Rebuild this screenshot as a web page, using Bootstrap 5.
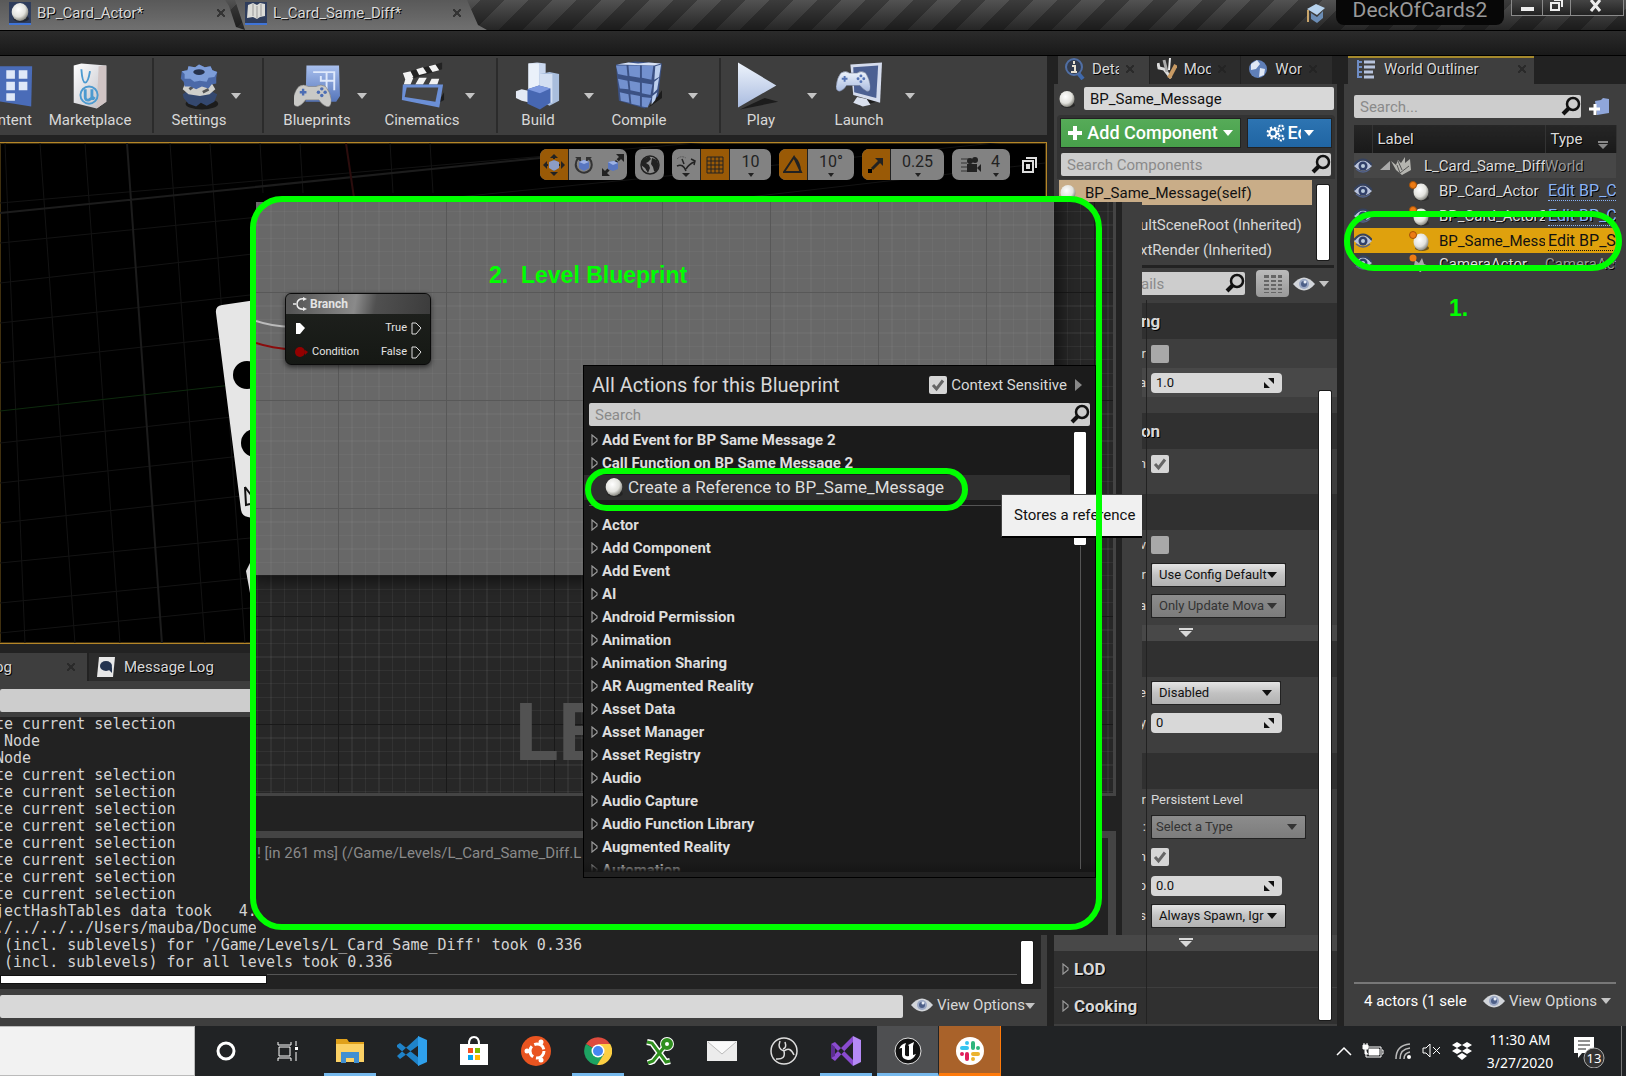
<!DOCTYPE html>
<html lang="en">
<head>
<meta charset="utf-8">
<meta name="viewport" content="width=device-width, initial-scale=1">
<title>DeckOfCards2 - Unreal Editor</title>
<link rel="stylesheet" href="https://cdn.jsdelivr.net/npm/bootstrap@5.3.0/dist/css/bootstrap.min.css">
<script src="https://cdn.jsdelivr.net/npm/bootstrap@5.3.0/dist/js/bootstrap.bundle.min.js"></script>
<style>
:root{--panel:#3e3e3e;--deep:#222;--ink:#d8d8d8;--lime:#00ff00}
body{font-family:Roboto,"Liberation Sans",sans-serif;font-size:15px;line-height:20px;color:var(--ink);background:var(--deep);height:100vh;overflow:hidden}
button,input,select{font-family:inherit;font-size:inherit;line-height:inherit}
button{background:none;border:0;padding:0;color:inherit}
svg{display:block;flex:none}
.shade{text-shadow:1px 1px 0 #000}
.h-tri{width:0;height:0;border:5px solid transparent;border-top:6px solid #c4c4c4;border-bottom:0;flex:none}
.h-tri.lit-tri{border-top-color:#fff}
.xclose{width:8px;height:8px;flex:none;opacity:.7;background:linear-gradient(45deg,transparent 38%,#222 38% 62%,transparent 62%),linear-gradient(-45deg,transparent 38%,#222 38% 62%,transparent 62%)}
/* title bar */
.titlebar{height:31px;border-bottom:1px solid #000;background:linear-gradient(rgba(0,0,0,0),rgba(0,0,0,.55)),repeating-linear-gradient(135deg,#3c3c3c 0 17px,#525252 17px 34px)}
.doc-tab{width:245px;height:30px;padding-left:9px;background:linear-gradient(#595959,#707070);clip-path:polygon(0 0,225px 0,229px 6px,236px 27px,245px 30px,0 30px);padding-bottom:4px}
.doc-tab+.doc-tab{width:252px;margin-left:-10px;padding-left:10px;clip-path:polygon(0 0,232px 0,243px 25px,252px 30px,10px 30px)}
.doc-tab .lbl{width:178px;padding-left:2px}
.thumb{width:22px;height:23px;background:#2f3d5c;border-bottom:2px solid #3f74d8}
.proj{width:168px;height:25px;margin-left:10px;background:#070707;border-radius:0 0 8px 8px;color:#999;font-size:21px;line-height:20px}
.winbtns{height:16px;margin:0 2px 0 7px;border:1px solid #8a8a8a;border-top:0;background:linear-gradient(#444,#222)}
.winbtns button{height:15px;width:31px;border-right:1px solid #8a8a8a}
.winbtns button:nth-child(2){width:28px}
.winbtns button:last-child{border:0;width:52px}
.menubar{height:25px;background:linear-gradient(#2b2b2b,#191919);border-bottom:1px solid #000}
/* workspace */
.work{display:grid;grid-template-columns:minmax(0,1fr) 283px 282px;column-gap:7px;min-height:0}
.tools{height:79px;background:var(--panel)}
.tool{padding-top:5px;white-space:nowrap;display:flex;flex-direction:column;align-items:center}
.tool>svg{width:46px;height:49px}
.tool span{line-height:20px}
.clipname{width:45px;overflow:hidden;align-items:flex-end;padding-right:13px}
.clipname>svg{margin-right:-4px}
.w90{width:90px}.w56{width:56px}.w72{width:72px}.w102{width:102px}.w46{width:46px}.w82{width:82px}.w76{width:76px}
.drop{width:18px;display:flex;justify-content:flex-end;align-items:center;padding:0 4px 0 0}
.drop.tight{width:6px}
.drop.wide{width:37px}.drop.mid{width:22px}
.vsep{width:2px;margin:2px 17px;background:#2b2b2b}
.viewport{height:502px;margin-top:7px;border:1px solid #b58628;border-left:0;box-shadow:inset 0 0 0 1px #40300f;background:#000;position:relative;overflow:hidden}
.vtools{padding:6px 9px 0 0}
.vgrp{height:31px;border-radius:7px;overflow:hidden;background:#828282;color:#222;font-weight:500;display:flex}
.vgrp>button{width:29px;display:flex;align-items:center;justify-content:center;border-right:1px solid #222}
.vgrp>button:last-child{border-right:0}
.vgrp>button.on{background:#9a5a06}
.vgrp>button.num{flex-direction:column;line-height:17px;font-size:16px;padding-top:1px;gap:3px}
.num .h-tri{border-width:4px 3px 0;border-color:#222 transparent transparent}
.vgrp>.w41{width:41px}.vgrp>.w46b{width:46px}.vgrp>.w53{width:53px}
.ltab{height:28px;background:#2c2c2c;padding:0 8px;display:flex;align-items:center;gap:9px}
.ltab.act{background:var(--panel);padding:0 12px 0 0;width:87px}
.ltab+.ltab{margin-left:2px;flex:1}
.ltab.act>span{margin-left:-5px}
.fld{background:#cdcdcd;border:0;height:23px;color:#111;padding:0 6px;border-radius:2px;min-width:0;outline:0}
.fld::placeholder{color:#8a8a8a;opacity:1}
.fld.soft{background:#d8d8d8}
.outlog{background:var(--panel)}
.log{font-family:"DejaVu Sans Mono","Liberation Mono",monospace;font-size:15px;line-height:17px;background:#222;height:272px;margin:5px 6px 6px 0;white-space:pre;overflow:hidden;position:relative}
.log pre{margin:-1px 0 0 -5px;font:inherit;overflow:visible;color:#d4d4d4}
.hbar{position:absolute;left:0;bottom:5px;width:267px;height:9px;background:#fff;border:1px solid #111}
.hline{position:absolute;left:267px;right:24px;bottom:14px;height:1px;background:#555}
.vbar{background:#fff;width:12px;position:absolute;border-radius:1px;outline:1px solid #1a1a1a}
/* details */
.ptab{flex:1;height:28px;background:#2c2c2c;border-right:1px solid #222;display:flex;align-items:center;gap:7px;padding:0 0 2px 7px}
.ptab.act{background:var(--panel)}
.ptab .cut{width:27px;overflow:hidden;white-space:nowrap}
.cta{height:30px;font-weight:500;font-size:18px;color:#fff;display:flex;align-items:center;justify-content:center;gap:5px;overflow:hidden;white-space:nowrap;border:1px solid #222}
.cta.go{background:linear-gradient(#56ab58,#47a04a);width:181px}
.cta.edit{background:linear-gradient(#2d74b2,#2065a3);width:85px;gap:3px}
.cta .cutword{width:13px;overflow:hidden;text-align:left}
.namerow{height:31px;padding:0 3px 2px 4px}
.ctabox{background:#333;margin:0 2px 0 3px;padding:3px 3px 3px;border-radius:4px 4px 0 0}
.searchrow{margin:5px 1px 0}
.self{background:#c9ad88;color:#111;height:25px;width:253px;margin:1px 0 0 5px}
.comps{padding-top:8px}
.comp{height:25px;padding-left:86px;line-height:25px}
.split{border-top:3px solid #222;margin:2px 3px 0}
.dsearch{width:191px}
.dsearch .fld{margin-left:30px;padding-left:57px}
.matrix{background:linear-gradient(#bbb,#999);margin-left:11px}
.sec{height:36px;background:#303030;font-weight:700;font-size:17px;line-height:36px;padding-left:87px}
.sec.open{padding-left:8px}
.sec+.sec{margin-top:1px}
.prow{display:flex;align-items:center;height:29px}
.prow.tall{height:31px}.prow.alt{background:#484848}.prow.text{height:22px;font-size:13px}
.prow label,.prow .nm{width:92px;text-align:right;font-size:13px;overflow:hidden;white-space:nowrap;margin-right:5px}
.s16{height:16px}.s4{height:4px}
.more{height:16px;background:#484848;display:flex;justify-content:center;align-items:center;padding-right:20px}
.chk{appearance:none;width:18px;height:18px;border-radius:2px;background:#a8a8a8;margin:0;flex:none}
.chk:checked{background:#d6d6d6 url("data:image/svg+xml,%3Csvg xmlns='http://www.w3.org/2000/svg' viewBox='0 0 18 18'%3E%3Cpath d='M4 9l3.500 4L14 4.500' fill='none' stroke='%23666' stroke-width='3'/%3E%3C/svg%3E")}
.numf{width:131px;height:20px;background:#d8d8d8;border-radius:4px;display:flex;align-items:center}
.numf input{flex:1;min-width:0;background:none;border:0;font-size:13px;padding:0 0 0 5px;color:#111;outline:0}
.numf svg{margin-right:7px}
.sel{position:relative;border:1px solid #222;width:135px}
.sel select{appearance:none;display:block;width:100%;height:22px;border:0;border-radius:1px;font-size:13px;padding:0 16px 0 7px;color:#111;background:linear-gradient(#e4e4e4,#c2c2c2 50%,#b2b2b2)}
.sel::after{content:"";position:absolute;right:8px;top:8px;border:5px solid transparent;border-top:6px solid #111;border-bottom:0;pointer-events:none}
.sel select:disabled{background:linear-gradient(#8c8c8c,#7c7c7c);color:#333;opacity:1}
.sel.off::after{border-top-color:#333}
.sel.w130{width:130px}.sel.w155{width:155px}
.sel.w155 select{padding-left:4px}
.guide{position:absolute;left:92px;top:244px;bottom:2px;width:1px;background:#222}
/* outliner */
.otab{width:186px;height:28px;background:var(--panel);border-top:2px solid #a5892c;padding-bottom:4px}
.otable{width:262px;table-layout:fixed;border-collapse:collapse;color:#dcdcdc;margin-top:7px}
.otable th{height:28px;background:linear-gradient(#262626,#191919);font-weight:400;padding:0 0 0 5px;border-right:1px solid #333;white-space:nowrap}
.otable .sorted{border-width:0 5px 6px;border-color:transparent transparent #ddd;margin:-2px 79px 0 0}
.otable td{height:25px;padding:0;white-space:nowrap;overflow:hidden}
.otable td .kid{padding-left:37px}
.otable td .nm2{padding-left:10px}
.otable .first td{background:#474747;height:25px}
.otable .dim{color:#999}
.otable .pick{text-shadow:none}
.otable .pick td{background:#dfa10d}
.otable .pick td,.otable .pick a{color:#111}
.otable a{color:#8ab4f8;text-decoration:none;border-bottom:1px dotted #8ab4f8;font-size:16px;margin-left:3px}
.otable .pick a{border-color:#111}
.otable .lastrow td>div{height:18px;overflow:hidden}
.otable .lastrow td{height:18px;vertical-align:top;padding-top:1px}
.ofoot{border-top:2px solid #777;height:44px;padding:0 5px 8px 10px}
/* blueprint window */
.bp{position:absolute;left:256px;top:202px;width:886px;height:733px;background:#222;overflow:hidden;z-index:2}
.graph{width:860px;height:594px;position:relative;border-right:3px solid #444;border-bottom:3px solid #444;overflow:hidden;background:
 linear-gradient(90deg,#191919 1px,transparent 1px) 82px 0/108px 108px,
 linear-gradient(#191919 1px,transparent 1px) 0 90px/108px 108px,
 repeating-linear-gradient(90deg,rgba(255,255,255,.05) 0 1px,transparent 1px calc(108px/8)) 82px 0/108px 108px,
 repeating-linear-gradient(rgba(255,255,255,.05) 0 1px,transparent 1px calc(108px/8)) 0 90px/108px 108px,#272727}
.lit{position:absolute;inset:0 59px auto 0;height:373px;box-shadow:0 0 16px 6px rgba(0,0,0,.55);background:
 linear-gradient(90deg,#585858 1px,transparent 1px) 82px 0/108px 108px,
 linear-gradient(#585858 1px,transparent 1px) 0 90px/108px 108px,
 repeating-linear-gradient(90deg,rgba(255,255,255,.035) 0 1px,transparent 1px calc(108px/8)) 82px 0/108px 108px,
 repeating-linear-gradient(rgba(255,255,255,.035) 0 1px,transparent 1px calc(108px/8)) 0 90px/108px 108px,#686868}
.wires{position:absolute;left:0;top:110px}
.node{position:absolute;left:29px;top:91px;width:146px;height:72px;border:1px solid #0a0a0a;border-radius:6px;background:linear-gradient(#20221f,#151814);color:#e4e4e4;font-size:11px;line-height:16px;box-shadow:0 2px 5px rgba(0,0,0,.6);overflow:hidden}
.node header{height:20px;background:linear-gradient(100deg,#555 5%,#8a8a8a 48%,#505050 62%,#3c3c3c);font-weight:700;font-size:12px;gap:3px;padding-left:7px;padding-bottom:1px}
.node .pins{padding-top:2px}
.node .pin{height:24px;padding:0 8px 0 9px}
.mark-le{position:absolute;left:259px;top:491px;font-size:80px;line-height:80px;font-weight:700;color:#525252}
.bplog{border-top:7px solid #444;width:860px;height:104px;margin-top:35px;border-right:8px solid #444;padding:5px 0 0 1px;color:#8a8a8a}
.bpside{width:20px;background:var(--panel)}
.actions{position:absolute;left:583px;top:365px;width:513px;height:513px;z-index:3;background:#1b1b1b;border:1px solid #000;padding:0 5px;overflow:hidden}
.actions .head{height:37px;padding:0 0 0 3px}
.actions h1{font-size:20px;line-height:24px;font-weight:400;margin:0;flex:1}
.acts{list-style:none;margin:2px 0 0;padding:0;font-weight:700;color:#dedede}
.acts li{height:23px;display:flex;align-items:center;gap:3px;padding-left:2px;white-space:nowrap}
.acts .ref{height:25px;background:#2f2f2f;font-weight:400;font-size:17px;padding:0 0 2px 20px;margin:1px 20px 0 -5px;gap:4px}
.acts .rule{height:1px;background:#555;margin:5px 20px 7px 0}
.fade-end{position:absolute;left:0;right:0;bottom:5px;height:10px;background:linear-gradient(transparent,#161616)}
.foot-end{position:absolute;left:0;right:0;bottom:0;height:5px;background:#202020}
.rail{position:absolute;right:14px;top:66px;bottom:8px;width:1px;background:#555}
.tip{position:absolute;left:1001px;top:494px;width:141px;height:44px;z-index:4;background:#f0f0f0;color:#111;border:1px solid #444;border-right:0;border-bottom:2px solid #000;padding:10px 0 0 12px;white-space:nowrap;overflow:hidden}
.ring{position:absolute;border:6px solid var(--lime);z-index:5;pointer-events:none}
.ring.big{left:250px;top:196px;width:852px;height:734px;border-radius:32px}
.ring.refr{left:585px;top:468px;width:383px;height:43px;border-radius:22px}
.ring.sel-r{left:1344px;top:211px;width:278px;height:60px;border-radius:30px}
.note{position:absolute;z-index:5;color:var(--lime);font:700 23px/26px "Liberation Sans",Arial,sans-serif;white-space:pre}
.note.one{left:1449px;top:295px}.note.two{left:489px;top:262px}
/* taskbar */
.taskbar{height:50px;background:#212325;font-family:"Noto Sans","Open Sans",sans-serif;font-size:14px;line-height:23px;color:#fff}
.tsearch{width:195px;background:#f2f2f2;border:1px solid #bbb;border-left:0}
.app{width:62px;display:flex;align-items:center;justify-content:center;border:0 solid #76b9ed}
.app.run{border-bottom-width:3px;width:52px;margin:0 5px;padding-top:3px}
.app.hot{background:#4e4f51;border-bottom-width:3px;padding-top:3px;border-right:1px solid #212325}
.app.warn{background:#a9622a;border-color:#ff7a0a}
.clock{width:76px}
.tray{gap:10px}
.sliver{width:1px;height:50px;background:#777;margin:0 4px 0 5px}
</style>
</head>
<body class="d-flex flex-column">
<svg width="0" height="0" class="position-absolute">
 <defs>
  <radialGradient id="gball" cx=".4" cy=".35" r=".7"><stop offset="0" stop-color="#fff"/><stop offset=".6" stop-color="#e2e2dd"/><stop offset="1" stop-color="#77776f"/></radialGradient>
  <linearGradient id="gblue" x2="0" y2="1"><stop offset="0" stop-color="#a9c0ee"/><stop offset="1" stop-color="#5575ba"/></linearGradient>
  <linearGradient id="gpale" x2="0" y2="1"><stop offset="0" stop-color="#eef4fc"/><stop offset="1" stop-color="#a9bbdf"/></linearGradient>
  <linearGradient id="gwhite" x2="1" y2="1"><stop offset="0" stop-color="#fff"/><stop offset="1" stop-color="#bcbcc4"/></linearGradient>
  <symbol id="ball" viewBox="0 0 18 18"><ellipse cx="10" cy="15" rx="7" ry="3" fill="#1a1a1a" opacity=".6"/><ellipse cx="9" cy="9" rx="7.500" ry="8" fill="url(#gball)"/></symbol>
  <symbol id="mag" viewBox="0 0 20 20"><circle cx="12" cy="8" r="6" fill="none" stroke="#111" stroke-width="2.500"/><path d="M8 12l-6 6" stroke="#111" stroke-width="4"/></symbol>
  <symbol id="eye" viewBox="0 0 22 14"><path d="M0 7Q11-6 22 7 11 20 0 7z" fill="#d2d5da"/><circle cx="11" cy="7" r="5" fill="#9aa7c4"/><circle cx="11" cy="7" r="3" fill="#4d5f88"/><circle cx="12" cy="5" r="1.500" fill="#e8edf6"/></symbol>
  <symbol id="eye2" viewBox="0 0 18 16"><path d="M0 8Q9-3 18 8 9 17 0 8z" fill="#b9c3dc"/><path d="M0 7Q9-4 18 7" fill="none" stroke="#34415f" stroke-width="2"/><circle cx="9" cy="8" r="4.500" fill="#31406a"/><circle cx="9" cy="8" r="2" fill="#bcd"/><path d="M2 11Q9 17 16 11" fill="none" stroke="#53638c" stroke-width="1.500"/></symbol>
  <symbol id="tri" viewBox="0 0 8 12"><path d="M1 1v10l5-4V5z" fill="none" stroke="#9a9a9a" stroke-width="1.200"/></symbol>
  <symbol id="spin" viewBox="0 0 12 12"><path d="M5 1h6v6zM1 5v6h6z" fill="#111"/></symbol>
  <symbol id="more" viewBox="0 0 14 10"><path d="M0 0h14v2H0zM1 3h12L7 9z" fill="#d8d8d8"/></symbol>
  <symbol id="actor" viewBox="0 0 20 20"><ellipse cx="13" cy="17" rx="7" ry="3" fill="#222" opacity=".6"/><ellipse cx="12" cy="11" rx="7.500" ry="8.500" fill="url(#gball)"/><circle cx="4" cy="4" r="3.500" fill="#ec7b14" stroke="#a35108"/></symbol>
  <symbol id="pad" viewBox="0 0 36 22"><path d="M5 2q5-3 9 0h8q4-3 9 0 4 6 5 14 0 6-4 5-4-2-7-6H11q-3 5-7 6-4 0-4-5Q1 7 5 2z" fill="url(#gpale)" stroke="#6d7690" stroke-width=".6"/><path d="M6 8h6M9 5v6" stroke="#5574b5" stroke-width="2"/><circle cx="26" cy="5" r="1.500" fill="#5574b5"/><circle cx="26" cy="11" r="1.500" fill="#5574b5"/><circle cx="23" cy="8" r="1.500" fill="#5574b5"/><circle cx="29" cy="8" r="1.500" fill="#5574b5"/></symbol>
  <symbol id="padgrey" viewBox="0 0 40 26"><path d="M6 4q5-3 10 0h8q5-3 10 0 5 6 6 14 0 8-5 7-5-2-8-7H13q-3 5-8 7-5 0-5-6Q1 9 6 4z" fill="#c9c9c6" stroke="#777" stroke-width=".6"/><path d="M7 10h7M10.500 6.500v7" stroke="#4d6eb4" stroke-width="2.500"/><circle cx="30" cy="6.500" r="1.800" fill="#4d6eb4"/><circle cx="30" cy="13.500" r="1.800" fill="#4d6eb4"/><circle cx="26.500" cy="10" r="1.800" fill="#4d6eb4"/><circle cx="33.500" cy="10" r="1.800" fill="#4d6eb4"/></symbol>
 </defs>
</svg>

<header class="titlebar d-flex align-items-start flex-shrink-0">
 <div class="doc-tab d-flex align-items-center gap-1 shade"><div class="thumb"><svg width="22" height="20"><use href="#ball"/></svg></div><span class="lbl">BP_Card_Actor*</span><span class="xclose"></span></div>
 <div class="doc-tab d-flex align-items-center gap-1 shade"><div class="thumb"><svg width="22" height="20" viewBox="0 0 22 20"><path d="M3 3l5-2 4 2 3-2 5 1v12l-5 1-3 2-4-2-6 1z" fill="#dcdcd8"/><path d="M8 2v12M12 4v12M16 2v12" stroke="#999"/></svg></div><span class="lbl">L_Card_Same_Diff*</span><span class="xclose"></span></div>
 <svg class="ms-auto mt-1" width="20" height="20" viewBox="0 0 20 20"><path d="M1 5l9-5 9 4-8 7z" fill="#b7d3ee"/><path d="M5 9l6 4 6-6v7l-6 5-6-4z" fill="#6b8db5"/><path d="M2 6v12" stroke="#c9a56a" stroke-width="2"/></svg>
 <div class="proj text-center">DeckOfCards2</div>
 <div class="winbtns d-flex">
  <button aria-label="Minimize"><svg width="30" height="15"><path d="M9 7h13v4H9z" fill="#eee"/></svg></button>
  <button aria-label="Restore"><svg width="28" height="15"><path d="M8 3h8v7H8zM11 0h8v7" fill="none" stroke="#eee" stroke-width="2"/></svg></button>
  <button aria-label="Close"><svg width="50" height="15"><path d="M20 0l9 11M29 0l-9 11" stroke="#eee" stroke-width="3"/></svg></button>
 </div>
</header>
<div class="menubar flex-shrink-0"></div>

<main class="work flex-grow-1">
 <section class="d-flex flex-column">
  <div class="tools d-flex shade">
   <button class="tool clipname"><svg viewBox="0 0 48 50"><path d="M0 5h44l-1 42-43-7z" fill="#4a6cb8"/><path d="M17 9h9v9h-9zM30 9h9v9h-9zM17 21h9v9h-9zM30 21h9v9h-9zM17 33h9v8h-9z" fill="#dfe8f8"/></svg><span>Content</span></button>
   <button class="tool w90"><svg viewBox="0 0 48 50"><path d="M34 48l7-8-4-3z" fill="#222"/><path d="M7 4l8-2 26 2v38l-10 7L7 43z" fill="url(#gwhite)"/><path d="M33 5l8-1v38l-10 7z" fill="#d0c4c4"/><path d="M15 8q1 14 4 14t5-12" fill="none" stroke="#4c9ad0" stroke-width="2"/><circle cx="23" cy="35" r="9" fill="none" stroke="#4c9ad0" stroke-width="2"/><path d="M19 29v8q0 4 4 3l3-2v-9M26 37l3 2" fill="none" stroke="#4c9ad0" stroke-width="3"/></svg><span>Marketplace</span></button>
   <div class="vsep"></div>
   <button class="tool w56"><svg viewBox="0 0 48 50"><ellipse cx="27" cy="44" rx="17" ry="6" fill="#1c1c1c"/><path d="M7 34l6-4 22 0 8 4-3 8-8 4-6-3-5 4-8-3-5-6z" fill="#34486f"/><path d="M9 24l28-2 4 7-6 5-10 2-12-2-6-5z" fill="#cfcfcb"/><path d="M14 29l4-3M28 32l6-3" stroke="#555" stroke-width="3"/><path d="M6 10l6-1 1-4 7 1 4-3 6 3 6-1 2 4 5 2-1 6 0 6-5 1-3 4-7-2-6 3-6-3-6 0-1-5-3-3z" fill="#4b69a8"/><path d="M6 10l6-1 1-4 7 1 4-3 6 3 6-1 2 4 5 2-3 5-6 1-2 4-7-1-6 1-4-3-6 0 0-5z" fill="#7d9dd8"/><ellipse cx="24" cy="11" rx="6" ry="3" fill="#26324c"/></svg><span>Settings</span></button>
   <button class="drop" aria-label="Settings menu"><i class="h-tri"></i></button>
   <div class="vsep"></div>
   <button class="tool w72"><svg viewBox="0 0 48 50"><path d="M13 4h34l1 32-4 6H12z" fill="url(#gblue)"/><path d="M20 11h22v19M28 20h14M34 11v19M28 15v6" fill="none" stroke="#dfe9fb" stroke-width="2"/><svg x="-1" y="22" width="40" height="26"><use href="#padgrey"/></svg></svg><span>Blueprints</span></button>
   <button class="drop" aria-label="Blueprints menu"><i class="h-tri"></i></button>
   <button class="tool w102"><svg viewBox="0 0 48 50"><path d="M40 44l7-12v8z" fill="#1c1c1c"/><path d="M4 12l41-11v7L7 20z" fill="#222"/><path d="M4 12l8-2 3 6-8 4zM18 8l7-2 4 6-8 2zM31 5l7-2 4 6-7 2zM7 17h8l-3 7H5zM21 17h8l-4 7h-8zM34 18h8l-2 6h-9z" fill="#f2f2f2"/><path d="M4 24h42l-4 24-39-8z" fill="#6b8fd6"/><path d="M8 27h33l-3 15-32-5z" fill="#444"/></svg><span>Cinematics</span></button>
   <button class="drop tight" aria-label="Cinematics menu"><i class="h-tri"></i></button>
   <div class="vsep"></div>
   <button class="tool w46"><svg viewBox="0 0 48 50"><path d="M14 2l9-1 9 1v32H14z" fill="#c9d7ee"/><path d="M14 2h11v32H14z" fill="#eaf1fa"/><path d="M26 13l10-2 10 2v28l-10 5-10-5z" fill="#a9bedd"/><path d="M26 13h13v30H26z" fill="#d3dff2"/><path d="M1 31l6-2 9 2v12l-9-2-6-3z" fill="#e3e9f4"/><path d="M13 29l12-4 12 3v15l-11 7-13-6z" fill="#4767b2"/><path d="M13 29l12-4 12 3-11 5z" fill="#7e9ae0"/></svg><span>Build</span></button>
   <button class="drop wide" aria-label="Build menu"><i class="h-tri"></i></button>
   <button class="tool w82"><svg viewBox="0 0 48 50"><path d="M34 48l14-18v8z" fill="#1c1c1c"/><path d="M0 3l20-3 28 2-4 34-14 13L3 41z" fill="#3b5184"/><g fill="#7391cf"><path d="M0 4h11l1 11-10-2zM13 4h12v13l-11-2zM27 4h12l-2 15-10-2zM2 18l10 2 1 9-9-1zM14 20l11 2v10l-10-2zM27 22l11 2-2 11-9-2zM4 32l9 2 1 9-9-2zM15 34l10 2v10l-9-2zM27 37l10 1-4 10-6-1z"/></g><path d="M41 5l6-2-2 13-5 3zM40 21l5-4-2 12-4 4zM38 36l5-4-2 8-4 5z" fill="#bccfee"/><path d="M1 3l12-2 10 1 11-1 13 1-7 2z" fill="#d8e2f5"/></svg><span>Compile</span></button>
   <button class="drop mid" aria-label="Compile menu"><i class="h-tri"></i></button>
   <div class="vsep"></div>
   <button class="tool w46"><svg viewBox="0 0 48 50"><path d="M2 50l40-8-14-4z" fill="#1c1c1c"/><path d="M0 1l40 24L0 48z" fill="url(#gpale)"/></svg><span>Play</span></button>
   <button class="drop wide" aria-label="Play menu"><i class="h-tri"></i></button>
   <button class="tool w76"><svg viewBox="0 0 48 50"><path d="M24 47l22-6-14-6z" fill="#1c1c1c"/><path d="M15 3l33-2-2 42-28-8z" fill="#d5dced"/><path d="M18 6l26-2-2 34-23-6z" fill="#4c6092"/><path d="M22 37l10 2 4 6-8 2-10-4z" fill="#d9e0ee"/><svg x="0" y="9" width="36" height="24"><use href="#pad"/></svg></svg><span>Launch</span></button>
   <button class="drop mid" aria-label="Launch menu"><i class="h-tri"></i></button>
  </div>

  <div class="viewport">
   <svg class="position-absolute top-0 start-0" width="1045" height="500">
    <g stroke="#131313"><path d="M0 60L1045-30M0 100L1045-5M0 140L1045 20M0 180L250 152M0 220L250 192M0 300L250 272M0 340L250 312M0 380L250 352M0 420L250 395M0 460L250 435M0 490L250 465"/><path d="M40 0L75 501M85 0L120 501M170 0L205 501M210 0L245 501M260 0l3 50M300 0l3 50M390 0l3 50M430 0l3 50M5 0l20 501"/></g>
    <path d="M127 0l35 501M0 70L540 15" stroke="#1c1c1c" stroke-width="2"/><path d="M346 0l8 55" stroke="#2c0d0d" stroke-width="2"/><path d="M0 268L250 240" stroke="#0d2a0d"/>
    <path d="M216 170q-1-7 6-8l34-5v219l-8-2q-6-1-7-7z" fill="#e6e6e6"/><circle cx="247" cy="232" r="14"/><circle cx="255" cy="300" r="14"/><path d="M245 344l1 18 4-1M245 344l6 8" stroke="#111" stroke-width="2" fill="none"/><path d="M250 420l-4 8 4 22z" fill="#ddd"/>
   </svg>
   <div class="vtools d-flex justify-content-end align-items-center position-relative">
    <div class="vgrp">
     <button class="on" aria-label="Move"><svg width="22" height="22" viewBox="0 0 22 22"><path d="M11 0l4 4H7zM11 22l4-4H7zM0 11l4-4v8zM22 11l-4-4v8z" fill="#222"/><path d="M11 3v16M3 11h16" stroke="#222" stroke-width="2" stroke-dasharray="2 1"/><path d="M6 8l5-2 5 2v6l-5 3-5-3z" fill="#8c9cc4"/></svg></button>
     <button aria-label="Rotate" class="border-0"><svg width="20" height="22" viewBox="0 0 20 22"><path d="M4 4q-5 8 1 13 6 4 11-1 4-6-1-12" fill="none" stroke="#333" stroke-width="2"/><path d="M1 3h6v5zM18 3h-6v5z" fill="#333"/><path d="M5 8l5-2 5 2v6l-5 3-5-3z" fill="#5876c0"/><path d="M5 8l5-2 5 2-5 2z" fill="#9db2e4"/></svg></button>
     <button aria-label="Scale"><svg width="22" height="22" viewBox="0 0 22 22"><path d="M14 0h8v8zM0 14v8h8z" fill="#222"/><path d="M3 19L19 3" stroke="#222" stroke-width="3" stroke-dasharray="5 1"/><path d="M6 8l6-1 4 2v6l-5 2-5-2z" fill="#5876c0"/><path d="M6 8l6-1 4 2-5 2z" fill="#9db2e4"/></svg></button></div>
    <div class="vgrp ms-2"><button aria-label="World space"><svg width="22" height="22" viewBox="0 0 22 22"><circle cx="11" cy="11" r="9" fill="#8c8c8c" stroke="#222" stroke-width="1.500"/><path d="M3 6l7-4 2 3-3 3-2 1 3 2 1 3-2 5-3-5-4-3zM13 4l5 2 2 6-3 6-2-1-1-4-2-3z" fill="#222"/></svg></button></div>
    <div class="vgrp ms-2"><button aria-label="Surface snapping"><svg width="20" height="24" viewBox="0 0 20 24"><path d="M1 13q6-3 9 5M10 16q3-5 8-7M15 6l4 2-1 4M8 11l-2-5" fill="none" stroke="#222" stroke-width="1.500"/><path d="M1 6q4-4 9-1" fill="none" stroke="#555" stroke-dasharray="2 1"/><path d="M6 20h8l-4 4z" fill="#222"/></svg></button>
     <button class="on" aria-label="Grid snap"><svg width="18" height="18"><path d="M1 1h16v16H1zM1 5h16M1 9h16M1 13h16M5 1v16M9 1v16M13 1v16" fill="none" stroke="#222"/></svg></button>
     <button class="num w41">10<i class="h-tri"></i></button></div>
    <div class="vgrp ms-2"><button class="on" aria-label="Angle snap"><svg width="20" height="20"><path d="M1 17h17L11 2zM11 2q6 6 6 14" fill="none" stroke="#222" stroke-width="2"/></svg></button>
     <button class="num w46b">10°<i class="h-tri"></i></button></div>
    <div class="vgrp ms-2"><button class="on" aria-label="Scale snap"><svg width="16" height="16"><path d="M4 12l8-8" stroke="#222" stroke-width="3"/><path d="M7 1h8v8z" fill="#222"/><path d="M0 12h4v4H0z"/></svg></button>
     <button class="num w53">0.25<i class="h-tri"></i></button></div>
    <div class="vgrp ms-2"><button class="border-0 ps-2" aria-label="Camera speed"><svg width="20" height="18"><path d="M0 3h8M0 7h6M0 11h6M0 15h8" stroke="#333"/><circle cx="9" cy="5" r="3" fill="#222"/><circle cx="14" cy="4" r="3" fill="#222"/><path d="M6 8h10v8H6zM16 12l4-4v8z" fill="#222"/></svg></button><button class="num">4<i class="h-tri"></i></button></div>
    <button class="ms-2 ps-1" aria-label="Maximize"><svg width="15" height="16"><path d="M4 1h10v10M1 4h10v11H1z" fill="none" stroke="#ddd" stroke-width="2"/><path d="M4 7h4v5H4z" fill="#ddd"/></svg></button>
   </div>
  </div>

  <div class="d-flex shade" style="margin-top:9px">
   <div class="ltab act"><span>og</span><i class="xclose ms-auto"></i></div>
   <div class="ltab"><svg width="18" height="20" viewBox="0 0 18 20"><path d="M2 0h16l-2 20H0z" fill="#e8e8e8"/><ellipse cx="9" cy="9" rx="6" ry="5" fill="#24344f"/><path d="M11 12l4 4v-6z" fill="#24344f"/></svg><span>Message Log</span></div>
  </div>
  <div class="flex-grow-1 outlog">
   <div class="pt-2"><input class="fld d-block w-100" aria-label="Search log"></div>
   <div class="log"><pre>te current selection
 Node
Node
te current selection
te current selection
te current selection
te current selection
te current selection
te current selection
te current selection
te current selection
jectHashTables data took   4.
./../../../Users/mauba/Docume
 (incl. sublevels) for '/Game/Levels/L_Card_Same_Diff' took 0.336
 (incl. sublevels) for all levels took 0.336</pre><div class="hbar"></div><div class="hline"></div><div class="vbar" style="right:8px;top:224px;height:43px"></div></div>
   <div class="d-flex align-items-start pe-2"><input class="fld soft flex-grow-1" aria-label="Console command"><button class="d-flex align-items-center gap-1 ps-2"><svg width="22" height="14"><use href="#eye"/></svg><span>View Options</span></button><i class="h-tri mt-2 me-1"></i></div>
  </div>
 </section>

 <section class="d-flex flex-column position-relative">
  <div class="d-flex shade px-1">
   <div class="ptab act"><svg width="20" height="22" viewBox="0 0 20 22"><path d="M13 15l5 6" stroke="#3f69ad" stroke-width="4"/><circle cx="9" cy="9" r="8" fill="#333c4e" stroke="#506fa5" stroke-width="2"/><path d="M9 3v3M7 8h3v6M6 14h6" stroke="#e8e0d0" stroke-width="2" fill="none"/></svg><span class="cut">Details</span><i class="xclose"></i></div>
   <div class="ptab"><svg width="20" height="22" viewBox="0 0 20 22"><path d="M1 5l1 5 5 1 7 9" fill="none" stroke="#ddd" stroke-width="3"/><path d="M7 2l3 12" stroke="#aaa" stroke-width="3"/><path d="M13 0l-1 12" stroke="#eee" stroke-width="2"/><path d="M19 7l-7 13" stroke="#c89a63" stroke-width="4"/></svg><span class="cut">Modes</span><i class="xclose"></i></div>
   <div class="ptab"><svg width="20" height="20" viewBox="0 0 20 20"><circle cx="10" cy="10" r="9" fill="#5f7fb8"/><path d="M3 5l6-4 3 4-4 5-5 1zM12 9l5 1-1 6-5 2z" fill="#dfe7f5"/></svg><span class="cut">World Settings</span><i class="xclose"></i></div>
  </div>
  <div class="flex-grow-1 outlog">
   <div class="namerow d-flex align-items-center"><svg width="18" height="20"><use href="#ball"/></svg><input class="fld soft flex-grow-1 ms-2" value="BP_Same_Message" aria-label="Actor name"></div>
   <div class="ctabox">
    <div class="d-flex justify-content-between shade"><button class="cta go"><svg width="14" height="14"><path d="M5 0h4v5h5v4H9v5H5V9H0V5h5z" fill="#fff"/></svg>Add Component<i class="h-tri lit-tri"></i></button><button class="cta edit"><svg width="19" height="18" viewBox="0 0 19 18"><circle cx="7" cy="9" r="5" fill="none" stroke="#fff" stroke-width="3" stroke-dasharray="2 2"/><circle cx="7" cy="9" r="3.500" fill="none" stroke="#fff" stroke-width="2"/><circle cx="15" cy="4" r="2.500" fill="none" stroke="#fff" stroke-width="2" stroke-dasharray="2 1"/><circle cx="15" cy="14" r="2.500" fill="none" stroke="#fff" stroke-width="2" stroke-dasharray="2 1"/></svg><span class="cutword">Edit</span><i class="h-tri lit-tri"></i></button></div>
    <div class="searchrow d-flex position-relative"><input class="fld w-100" placeholder="Search Components" aria-label="Search Components"><svg class="position-absolute end-0" width="20" height="22"><use href="#mag"/></svg></div>
   </div>
   <div class="self d-flex align-items-center"><svg width="18" height="20"><use href="#ball"/></svg><span class="ps-2">BP_Same_Message(self)</span></div>
   <div class="comps"><div class="comp">ultSceneRoot (Inherited)</div><div class="comp">xtRender (Inherited)</div></div>
   <div class="split"></div>
   <div class="d-flex align-items-center prow tall"><div class="dsearch position-relative d-flex"><input class="fld w-100" placeholder="ails" aria-label="Search Details"><svg class="position-absolute end-0" width="20" height="22"><use href="#mag"/></svg></div>
    <button class="matrix rounded-1" aria-label="Property matrix"><svg width="33" height="27"><g fill="#666"><path d="M8 5h5v3H8zM15 5h5v3h-5zM22 5h4v3h-4zM8 10h5v2H8zM15 10h5v2h-5zM22 10h4v2h-4zM8 14h5v2H8zM15 14h5v2h-5zM22 14h4v2h-4zM8 18h5v2H8zM15 18h5v2h-5zM22 18h4v2h-4zM8 22h5v1H8zM15 22h5v1h-5zM22 22h4v1h-4z"/></g></svg></button><svg class="ms-1" width="22" height="14"><use href="#eye"/></svg><i class="h-tri ms-1"></i></div>
   <div class="s4"></div>
   <div class="sec shade">ng</div>
   <div class="prow"><label for="p1">r</label><input id="p1" type="checkbox" class="chk"></div>
   <div class="prow alt"><label for="p2">a</label><div class="numf"><input id="p2" value="1.0"><svg width="12" height="12"><use href="#spin"/></svg></div></div>
   <div class="s16"></div>
   <div class="sec shade">on</div>
   <div class="prow"><label for="p3">n</label><input id="p3" type="checkbox" class="chk" checked></div>
   <div class="s16"></div>
   <div class="sec"></div>
   <div class="prow"><label for="p4">v</label><input id="p4" type="checkbox" class="chk"></div>
   <div class="prow tall"><label for="p5">r</label><div class="sel"><select id="p5"><option>Use Config Default</option></select></div></div>
   <div class="prow tall"><label for="p6">a</label><div class="sel off"><select id="p6" disabled><option>Only Update Mova</option></select></div></div>
   <div class="s4"></div>
   <div class="more"><svg width="14" height="10"><use href="#more"/></svg></div>
   <div class="sec"></div>
   <div class="prow tall"><label for="p7">e</label><div class="sel w130"><select id="p7"><option>Disabled</option></select></div></div>
   <div class="prow"><label for="p8">y</label><div class="numf"><input id="p8" value="0"><svg width="12" height="12"><use href="#spin"/></svg></div></div>
   <div class="s16"></div>
   <div class="sec"></div>
   <div class="prow text"><span class="nm">r</span><span>Persistent Level</span></div>
   <div class="prow tall"><label for="p9">:</label><div class="sel off w155"><select id="p9" disabled><option>Select a Type</option></select></div></div>
   <div class="prow"><label for="p10">n</label><input id="p10" type="checkbox" class="chk" checked></div>
   <div class="prow"><label for="p11">p</label><div class="numf"><input id="p11" value="0.0"><svg width="12" height="12"><use href="#spin"/></svg></div></div>
   <div class="prow tall"><label for="p12">s</label><div class="sel"><select id="p12"><option>Always Spawn, Igr</option></select></div></div>
   <div class="s4"></div>
   <div class="more"><svg width="14" height="10"><use href="#more"/></svg></div>
   <div class="sec open shade d-flex align-items-center gap-1"><svg width="8" height="12"><use href="#tri"/></svg>LOD</div>
   <div class="sec open shade d-flex align-items-center gap-1"><svg width="8" height="12"><use href="#tri"/></svg>Cooking</div>
  </div>
  <div class="guide"></div>
  <div class="vbar" style="right:8px;top:129px;height:75px"></div>
  <div class="vbar" style="right:6px;top:335px;bottom:6px"></div>
 </section>

 <section class="d-flex flex-column">
  <div class="otab ms-1 d-flex align-items-center shade"><svg class="ms-2" width="20" height="20"><path d="M2 1v18" stroke="#6e8cc4" stroke-width="2"/><path d="M2 3h4M2 8h4M2 13h4M2 18h4" stroke="#6e8cc4" stroke-width="2"/><path d="M8 3h11M8 8h11M8 13h9M8 18h10" stroke="#b8c4dc" stroke-width="3"/></svg><span class="ps-2">World Outliner</span><i class="xclose ms-auto me-2"></i></div>
  <div class="flex-grow-1 d-flex flex-column outlog" style="padding:11px 10px 0">
   <div class="d-flex align-items-center"><div class="d-flex position-relative" style="width:227px"><input class="fld w-100" placeholder="Search..." aria-label="Search outliner"><svg class="position-absolute end-0" width="20" height="22"><use href="#mag"/></svg></div>
    <svg class="ms-2" width="22" height="20" viewBox="0 0 22 20"><path d="M6 4l6-1 2-2 6 1v14l-12 2z" fill="#8fa6da"/><path d="M0 12h11M6 7v11" stroke="#fff" stroke-width="3"/></svg></div>
   <table class="otable shade">
    <colgroup><col style="width:18px"><col style="width:173px"><col style="width:71px"></colgroup>
    <thead><tr><th></th><th><div class="d-flex justify-content-between">Label<i class="h-tri sorted"></i></div></th><th><div class="d-flex align-items-end justify-content-between">Type<svg class="me-2" width="10" height="8"><path d="M0 0h10v2H0zM0 3h10L5 8z" fill="#888"/></svg></div></th></tr></thead>
    <tbody>
     <tr class="first"><td><svg width="18" height="16"><use href="#eye2"/></svg></td><td><div class="d-flex align-items-center ps-2"><svg width="10" height="10"><path d="M10 0v9H0z" fill="#aaa"/></svg><svg width="22" height="20" viewBox="0 0 22 20"><path d="M1 5l5 4 2-5 3 3 4-6v6l5-4 1 11-9 5-6-5z" fill="#b5b5b0"/><path d="M7 9l3 8 9-7M8 5l4 9" stroke="#555" fill="none"/></svg><span class="ps-2 ms-1">L_Card_Same_Diff</span></div></td><td class="dim">World</td></tr>
     <tr><td><svg width="18" height="16"><use href="#eye2"/></svg></td><td><div class="kid d-flex align-items-center"><svg width="20" height="20"><use href="#actor"/></svg><span class="nm2">BP_Card_Actor</span></div></td><td><a href="#">Edit BP_Card</a></td></tr>
     <tr><td><svg width="18" height="16"><use href="#eye2"/></svg></td><td><div class="kid d-flex align-items-center"><svg width="20" height="20"><use href="#actor"/></svg><span class="nm2">BP_Card_Actor2</span></div></td><td><a href="#">Edit BP_Card</a></td></tr>
     <tr class="pick"><td><svg width="18" height="16"><use href="#eye2"/></svg></td><td><div class="kid d-flex align-items-center"><svg width="20" height="20"><use href="#actor"/></svg><span class="nm2">BP_Same_Message</span></div></td><td><a href="#">Edit BP_Same</a></td></tr>
     <tr class="lastrow"><td><div><svg width="18" height="18"><use href="#eye2"/></svg></div></td><td><div class="kid d-flex"><svg width="20" height="20" viewBox="0 0 20 20"><path d="M6 6l4 3 3-5 2 6 5 2-6 3-3 4-2-5-4-2z" fill="#aaa"/><circle cx="4" cy="4" r="3.500" fill="#ec7b14"/></svg><span class="nm2">CameraActor</span></div></td><td class="dim"><div>CameraActor</div></td></tr>
    </tbody>
   </table>
   <div class="ofoot mt-auto d-flex align-items-center"><span class="flex-grow-1 text-white">4 actors (1 sele</span><button class="d-flex align-items-center gap-1"><svg width="22" height="14"><use href="#eye"/></svg><span>View Options</span><i class="h-tri"></i></button></div>
  </div>
 </section>
</main>

<div class="bp d-flex">
 <div>
  <div class="graph">
   <div class="mark-le">LE</div>
   <div class="lit"></div>
   <svg class="wires" width="50" height="50"><path d="M0 9q14 5 36 6" stroke="#bbb" fill="none" stroke-width="2"/><path d="M0 31q14 5 40 7" stroke="#8a0c0c" fill="none" stroke-width="2"/></svg>
   <div class="node">
    <header class="d-flex align-items-center"><svg width="14" height="14" viewBox="0 0 14 14"><path d="M0 7h3M12 2Q4 1 4 7t8 5" fill="none" stroke="#eee" stroke-width="1.500"/><path d="M10 0l4 2-4 2zM10 10l4 2-4 2z" fill="#eee"/></svg>Branch</header>
    <div class="pins">
     <div class="pin d-flex align-items-center justify-content-between"><svg width="11" height="13"><path d="M1 1h4l5 5-5 6H1z" fill="#fff"/></svg><span class="d-flex align-items-center gap-1">True<svg width="11" height="13"><path d="M1 1h4l5 5-5 6H1z" fill="none" stroke="#ddd"/></svg></span></div>
     <div class="pin d-flex align-items-center justify-content-between"><span class="d-flex align-items-center gap-1"><svg width="13" height="11"><circle cx="5" cy="5" r="5" fill="#930000"/><path d="M10 3l3 2-3 3z" fill="#930000"/></svg>Condition</span><span class="d-flex align-items-center gap-1">False<svg width="11" height="13"><path d="M1 1h4l5 5-5 6H1z" fill="none" stroke="#ddd"/></svg></span></div>
    </div>
   </div>
  </div>
  <div class="bplog">! [in 261 ms] (/Game/Levels/L_Card_Same_Diff.L</div>
 </div>
 <div class="bpside ms-auto"></div>
</div>

<div class="actions">
 <div class="head d-flex align-items-center"><h1>All Actions for this Blueprint</h1><input id="ctx" type="checkbox" class="chk" checked><label for="ctx" class="ps-1">Context Sensitive</label><svg class="ms-2 me-2" width="7" height="12"><path d="M0 0l7 6-7 6z" fill="#888"/></svg></div>
 <div class="position-relative d-flex"><input class="fld w-100" placeholder="Search" aria-label="Search actions"><svg class="position-absolute end-0" width="20" height="22"><use href="#mag"/></svg></div>
 <ul class="acts">
  <li><svg width="8" height="12"><use href="#tri"/></svg>Add Event for BP Same Message 2</li>
  <li><svg width="8" height="12"><use href="#tri"/></svg>Call Function on BP Same Message 2</li>
  <li class="ref"><svg width="20" height="20"><use href="#ball"/></svg>Create a Reference to BP_Same_Message</li>
  <li class="rule" aria-hidden="true"></li>
  <li><svg width="8" height="12"><use href="#tri"/></svg>Actor</li>
  <li><svg width="8" height="12"><use href="#tri"/></svg>Add Component</li>
  <li><svg width="8" height="12"><use href="#tri"/></svg>Add Event</li>
  <li><svg width="8" height="12"><use href="#tri"/></svg>AI</li>
  <li><svg width="8" height="12"><use href="#tri"/></svg>Android Permission</li>
  <li><svg width="8" height="12"><use href="#tri"/></svg>Animation</li>
  <li><svg width="8" height="12"><use href="#tri"/></svg>Animation Sharing</li>
  <li><svg width="8" height="12"><use href="#tri"/></svg>AR Augmented Reality</li>
  <li><svg width="8" height="12"><use href="#tri"/></svg>Asset Data</li>
  <li><svg width="8" height="12"><use href="#tri"/></svg>Asset Manager</li>
  <li><svg width="8" height="12"><use href="#tri"/></svg>Asset Registry</li>
  <li><svg width="8" height="12"><use href="#tri"/></svg>Audio</li>
  <li><svg width="8" height="12"><use href="#tri"/></svg>Audio Capture</li>
  <li><svg width="8" height="12"><use href="#tri"/></svg>Audio Function Library</li>
  <li><svg width="8" height="12"><use href="#tri"/></svg>Augmented Reality</li>
  <li><svg width="8" height="12"><use href="#tri"/></svg>Automation</li>
 </ul>
 <div class="fade-end"></div><div class="foot-end"></div>
 <div class="rail"></div>
 <div class="vbar" style="right:9px;top:66px;height:113px"></div>
</div>
<div class="tip">Stores a reference</div>
<div class="ring big"></div><div class="ring refr"></div><div class="ring sel-r"></div>
<div class="note one">1.</div><div class="note two">2.  Level Blueprint</div>

<footer class="taskbar d-flex flex-shrink-0">
 <input class="tsearch" aria-label="Windows search">
 <button class="app" aria-label="Cortana"><svg width="20" height="20"><circle cx="10" cy="10" r="8" fill="none" stroke="#fff" stroke-width="3"/></svg></button>
 <button class="app" aria-label="Task view"><svg width="22" height="20"><path d="M1 1v3h13V1M2 6h11v9H2zM1 20v-3h13v3M19 0v5M19 11v9" fill="none" stroke="#fff"/><path d="M18 6h3v3h-3z" fill="#fff"/></svg></button>
 <button class="app run" aria-label="File Explorer"><svg width="28" height="24" viewBox="0 0 28 24"><path d="M0 0h11l2 3h15v20H0z" fill="#e0a11b"/><path d="M0 5h28v18H0z" fill="#fbd165"/><path d="M5 24V13h18v11h-5v-5h-8v5z" fill="#3f8fd2"/></svg></button>
 <button class="app" aria-label="VS Code"><svg width="30" height="30" viewBox="0 0 30 30"><path d="M0 9l3-2 19 15v8L0 11zM0 20l3 3L22 9V0z" fill="#1f83c9"/><path d="M21 0l9 4v22l-9 4z" fill="#2fa0ec"/></svg></button>
 <button class="app" aria-label="Store"><svg width="28" height="30" viewBox="0 0 28 30"><path d="M9 8q0-7 5-7t5 7" fill="none" stroke="#fff" stroke-width="2"/><path d="M0 8h28v21H0z" fill="#fff"/><path d="M8 12h5v5H8z" fill="#f25022"/><path d="M15 12h5v5h-5z" fill="#7fba00"/><path d="M8 19h5v5H8z" fill="#00a4ef"/><path d="M15 19h5v5h-5z" fill="#ffb900"/></svg></button>
 <button class="app" aria-label="Ubuntu"><svg width="30" height="30" viewBox="0 0 30 30"><circle cx="15" cy="15" r="15" fill="#e95420"/><circle cx="16" cy="15" r="7" fill="none" stroke="#fff" stroke-width="3" stroke-dasharray="12 3"/><circle cx="6" cy="15" r="2.500" fill="#fff"/><circle cx="20" cy="6" r="2.500" fill="#fff"/><circle cx="20" cy="24" r="2.500" fill="#fff"/></svg></button>
 <button class="app run" aria-label="Chrome"><svg width="28" height="28" viewBox="0 0 28 28"><path d="M14 14L2 7a14 14 0 0 1 24 0z" fill="#dd4b3e"/><path d="M14 14L2 7a14 14 0 0 0 11 21l7-10z" fill="#1da362"/><path d="M14 7h12.200a14 14 0 0 1-13.200 21l7-11z" fill="#fdcf43"/><circle cx="14" cy="14" r="6.500" fill="#fff"/><circle cx="14" cy="14" r="5" fill="#4587f3"/></svg></button>
 <button class="app" aria-label="XShell"><svg width="28" height="28" viewBox="0 0 28 28"><g fill="none" stroke="#fff" stroke-width="6"><path d="M1 5l5 1 14 19 4-1M2 26l5-2L19 9"/><circle cx="21" cy="7" r="4"/></g><path d="M1 5l5 1 14 19 4-1M2 26l5-2L19 9" fill="none" stroke="#2f8f1f" stroke-width="3"/><circle cx="21" cy="7" r="4" fill="#fff" stroke="#2f8f1f" stroke-width="4"/></svg></button>
 <button class="app" aria-label="Mail"><svg width="30" height="20" viewBox="0 0 30 20"><path d="M0 0h30v20H0z" fill="#ececec"/><path d="M1 1l14 12L29 1" fill="#fafafa" stroke="#bbb"/></svg></button>
 <button class="app" aria-label="OBS"><svg width="28" height="28" viewBox="0 0 28 28"><circle cx="14" cy="14" r="13" fill="#222" stroke="#ddd" stroke-width="1.500"/><path d="M10 4q-3 8 4 10M14 14q2 9-8 8M14 14q6-5 10 4M13 12q4-1 2-7" fill="none" stroke="#ddd" stroke-width="1.500"/></svg></button>
 <button class="app run" aria-label="Visual Studio"><svg width="30" height="30" viewBox="0 0 30 30"><path d="M0 8l4-2 18 18v6zM0 22l4 3L22 6V0z" fill="#8a4bcf"/><path d="M0 8l4 3v9l-4 2z" fill="#5c2d91"/><path d="M22 0l8 4v22l-8 4z" fill="#b58af5"/></svg></button>
 <button class="app hot" aria-label="Unreal Engine"><svg width="28" height="28" viewBox="0 0 28 28"><circle cx="14" cy="14" r="13" fill="#111" stroke="#ddd"/><path d="M5 12q2-5 7-6l-1 3v9q1 2 4 1V9L14 8l6-3-1 4v9l3-1q-3 6-8 6-6-1-6-5v-7q-2 0-3 1z" fill="#fff"/></svg></button>
 <button class="app hot warn" aria-label="Slack"><svg width="28" height="28" viewBox="0 0 28 28"><circle cx="14" cy="14" r="14" fill="#fff"/><g fill="none" stroke-width="4" stroke-linecap="round"><path d="M6 11h5M11 6v0" stroke="#36c5f0"/><path d="M17 6v5M22 11v0" stroke="#2eb67d"/><path d="M17 17h5M17 22v0" stroke="#ecb22e"/><path d="M11 17v5M6 17v0" stroke="#e01e5a"/></g></svg></button>
 <div class="tray d-flex align-items-center ms-auto">
  <svg width="16" height="10"><path d="M1 9l7-7 7 7" fill="none" stroke="#fff" stroke-width="1.500"/></svg>
  <svg width="22" height="16" viewBox="0 0 22 16"><path d="M4 4h15v10H4zM20 7h1v4h-1" fill="none" stroke="#fff"/><path d="M7 6h10v6H7zM1 2h5v4H1zM2 0v2M5 0v2M3 6v5h3" fill="#fff" stroke="#fff"/></svg>
  <svg width="18" height="18" viewBox="0 0 18 18"><path d="M2 17Q2 3 16 2M6 17Q6 7 16 6M10 17q0-6 6-7" fill="none" stroke="#bbb" stroke-width="1.500"/><circle cx="15" cy="15" r="2" fill="#fff"/></svg>
  <svg width="20" height="16" viewBox="0 0 20 16"><path d="M1 5h3l4-4v13l-4-4H1zM11 4l7 7M18 4l-7 7" fill="none" stroke="#fff"/></svg>
  <svg width="20" height="18" viewBox="0 0 20 18"><path d="M5 0l5 3-5 3-5-3zM15 0l5 3-5 3-5-3zM5 6l5 3-5 3-5-3zM15 6l5 3-5 3-5-3zM10 11l5 3-5 4-5-4z" fill="#fff"/></svg>
  <div class="clock text-center">11:30 AM<br>3/27/2020</div>
  <svg class="ms-1" width="34" height="34" viewBox="0 0 34 34"><path d="M2 3h20v16H10l-4 5v-5H2z" fill="#fff"/><path d="M6 7h12M6 11h12M6 15h8" stroke="#222"/><circle cx="22" cy="24" r="10" fill="#333" stroke="#aaa"/><text x="22" y="29" font-size="13" fill="#fff" text-anchor="middle">13</text></svg>
  <div class="sliver"></div>
 </div>
</footer>
</body>
</html>
